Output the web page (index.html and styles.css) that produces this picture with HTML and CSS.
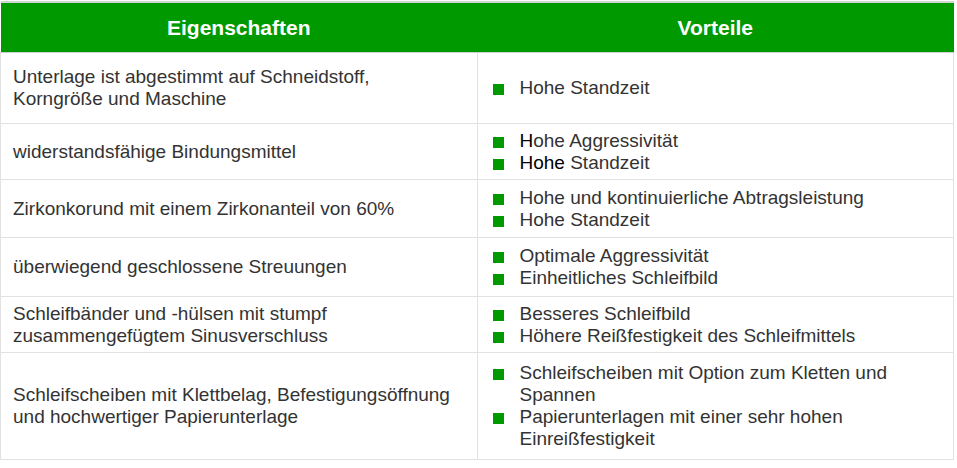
FILE: index.html
```html
<!DOCTYPE html>
<html lang="de">
<head>
<meta charset="utf-8">
<title>Eigenschaften und Vorteile</title>
<link rel="stylesheet" href="styles.css">
</head>
<body>
<table class="spec">
  <thead>
    <tr>
      <th>Eigenschaften</th>
      <th>Vorteile</th>
    </tr>
  </thead>
  <tbody>
    <tr class="r1">
      <td>Unterlage ist abgestimmt auf Schneidstoff,<br>Korngröße und Maschine</td>
      <td><ul><li>Hohe Standzeit</li></ul></td>
    </tr>
    <tr class="r2">
      <td>widerstandsfähige Bindungsmittel</td>
      <td><ul><li><span class="dark">H</span>ohe Aggressivität</li><li><span class="dark">Hohe</span> Standzeit</li></ul></td>
    </tr>
    <tr class="r3">
      <td>Zirkonkorund mit einem Zirkonanteil von 60%</td>
      <td><ul><li>Hohe und kontinuierliche Abtragsleistung</li><li>Hohe Standzeit</li></ul></td>
    </tr>
    <tr class="r4">
      <td>überwiegend geschlossene Streuungen</td>
      <td><ul><li>Optimale Aggressivität</li><li>Einheitliches Schleifbild</li></ul></td>
    </tr>
    <tr class="r5">
      <td>Schleifbänder und -hülsen mit stumpf<br>zusammengefügtem Sinusverschluss</td>
      <td><ul><li>Besseres Schleifbild</li><li>Höhere Reißfestigkeit des Schleifmittels</li></ul></td>
    </tr>
    <tr class="r6">
      <td>Schleifscheiben mit Klettbelag, Befestigungsöffnung<br>und hochwertiger Papierunterlage</td>
      <td><ul><li>Schleifscheiben mit Option zum Kletten und Spannen</li><li>Papierunterlagen mit einer sehr hohen Einreißfestigkeit</li></ul></td>
    </tr>
  </tbody>
</table>
</body>
</html>
```

FILE: styles.css
```css
html, body {
  margin: 0;
  padding: 0;
  background: #ffffff;
}

body {
  padding-top: 1px;
  font-family: "Liberation Sans", Arial, sans-serif;
  color: #333333;
}

.spec {
  width: 954px;
  border-collapse: collapse;
  table-layout: fixed;
  font-size: 19px;
  line-height: 22px;
}

.spec th {
  background: #009900;
  color: #ffffff;
  font-size: 21px;
  font-weight: bold;
  height: 49px;
  padding: 0 12px;
  text-align: center;
  border-top: 2px solid #d4d4d4;
  border-bottom: 1px solid #cfcfcf;
}

.spec td {
  width: 50%;
  vertical-align: middle;
  padding: 0 12px;
  border: 1px solid #e2e2e2;
}

.spec td + td {
  padding-left: 15px;
}

.spec ul {
  list-style: none;
  margin: 0;
  padding: 0;
}

.spec li {
  padding-left: 27px;
  text-indent: -27px;
}

.spec li::before {
  content: "";
  display: inline-block;
  width: 11px;
  height: 11px;
  margin-right: 16px;
  vertical-align: -1px;
  background: #009900;
}

.dark {
  color: #000000;
}

.r1 td { height: 70px; }
.r2 td { height: 55px; }
.r3 td { height: 57px; }
.r4 td { height: 58px; }
.r5 td { height: 55px; }
.r6 td { height: 106px; }
```
